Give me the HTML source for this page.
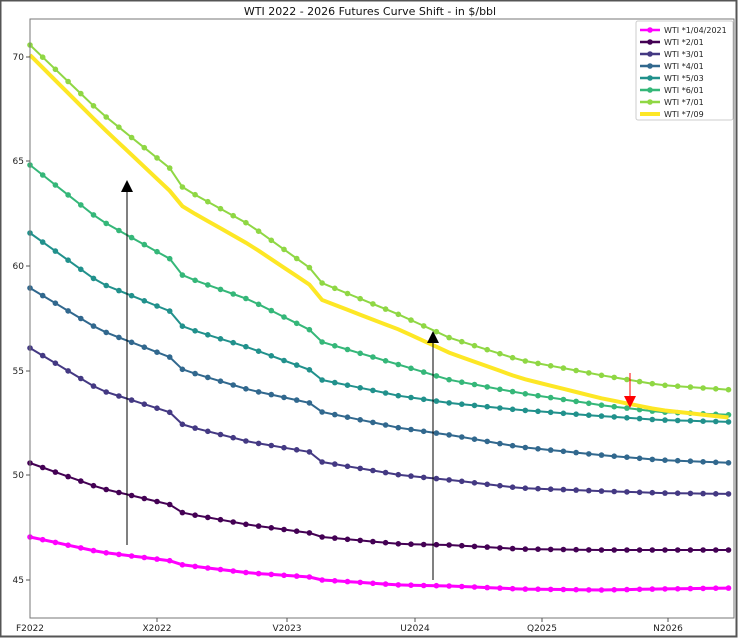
<!DOCTYPE html>
<html><head><style>
body{margin:0;background:#fff;width:740px;height:639px;overflow:hidden;font-family:"DejaVu Sans","Liberation Sans",sans-serif}
svg{position:absolute;left:0;top:0}
</style></head><body>
<svg width="740" height="639" xmlns="http://www.w3.org/2000/svg" font-family="DejaVu Sans, Liberation Sans, sans-serif">
<rect x="0.5" y="0.5" width="736" height="636" fill="#fff" stroke="#555" stroke-width="2"/>
<text x="370" y="15" font-size="11" text-anchor="middle" fill="#111">WTI 2022 - 2026 Futures Curve Shift - in $/bbl</text>
<g id="curves"></g>
<rect x="30" y="19" width="704" height="599" fill="none" stroke="#777" stroke-width="1"/>
<g font-size="9" fill="#222" text-anchor="end">
<line x1="26" x2="30" y1="57" y2="57" stroke="#555"/><text x="24" y="60">70</text>
<line x1="26" x2="30" y1="161" y2="161" stroke="#555"/><text x="24" y="164">65</text>
<line x1="26" x2="30" y1="266" y2="266" stroke="#555"/><text x="24" y="269">60</text>
<line x1="26" x2="30" y1="371" y2="371" stroke="#555"/><text x="24" y="374">55</text>
<line x1="26" x2="30" y1="475" y2="475" stroke="#555"/><text x="24" y="478">50</text>
<line x1="26" x2="30" y1="580" y2="580" stroke="#555"/><text x="24" y="583">45</text>
</g>
<g font-size="9" fill="#222" text-anchor="middle">
<text x="30" y="631">F2022</text><text x="157" y="631">X2022</text><text x="287" y="631">V2023</text>
<text x="415" y="631">U2024</text><text x="542" y="631">Q2025</text><text x="668" y="631">N2026</text>
<g stroke="#555"><line x1="157" x2="157" y1="618" y2="622"/><line x1="287" x2="287" y1="618" y2="622"/><line x1="415" x2="415" y1="618" y2="622"/><line x1="542" x2="542" y1="618" y2="622"/><line x1="668" x2="668" y1="618" y2="622"/></g>
</g>
<line x1="127" y1="545" x2="127" y2="190" stroke="#000" stroke-width="1"/>
<polygon points="127,180 121,192 133,192" fill="#000"/>
<line x1="433" y1="580" x2="433" y2="342" stroke="#000" stroke-width="1"/>
<polygon points="433,331 427,343 439,343" fill="#000"/>
<line x1="630" y1="373" x2="630" y2="397" stroke="#f00" stroke-width="1"/>
<polygon points="630,408 624,396 636,396" fill="#f00"/>
<rect x="636" y="21" width="97" height="99" fill="#fff" fill-opacity="0.9" stroke="#ccc" rx="2"/>
<g font-size="8" fill="#222" id="leg">
<text x="664" y="33">WTI *1/04/2021</text>
<text x="664" y="45">WTI *2/01</text>
<text x="664" y="57">WTI *3/01</text>
<text x="664" y="69">WTI *4/01</text>
<text x="664" y="81">WTI *5/03</text>
<text x="664" y="93">WTI *6/01</text>
<text x="664" y="105">WTI *7/01</text>
<text x="664" y="117">WTI *7/09</text>
</g>
</svg>
<script>
var S=[
["#ff00ff",3,true,[[30,537],[100,552],[172,561],[183,565],[250,573],[310,577],[322,580],[400,585],[450,586],[520,589],[600,590],[660,589],[733,588]]],
["#440154",2,true,[[30,463],[100,488],[172,505],[183,513],[250,525],[310,533],[322,537],[400,544],[450,545],[520,549],[600,550],[660,550],[733,550]]],
["#443983",2,true,[[30,348],[100,390],[172,413],[183,425],[250,442],[310,452],[322,462],[400,475],[450,480],[520,488],[600,491],[660,493],[733,494]]],
["#31688e",2,true,[[30,288],[100,330],[172,358],[183,370],[250,390],[310,403],[322,412],[400,428],[450,435],[520,447],[600,455],[660,460],[733,463]]],
["#21918c",2,true,[[30,233],[100,283],[172,312],[183,327],[250,348],[310,370],[322,380],[400,396],[450,403],[520,410],[600,416],[660,420],[733,422]]],
["#35b779",2,true,[[30,165],[100,220],[172,260],[183,276],[250,300],[310,330],[322,342],[400,365],[450,380],[520,393],[600,405],[660,412],[733,415]]],
["#8fd744",2,true,[[30,45],[100,112],[172,170],[183,188],[250,225],[310,268],[322,283],[400,315],[450,338],[520,360],[600,375],[660,385],[733,390]]],
["#fde725",4,false,[[30,55],[100,125],[172,193],[183,207],[250,245],[310,285],[322,300],[400,330],[450,353],[520,378],[600,398],[660,410],[733,418]]]
];
function f(k,x){for(var i=0;i<k.length-1;i++){if(x<=k[i+1][0]){var t=(x-k[i][0])/(k[i+1][0]-k[i][0]);return k[i][1]+t*(k[i+1][1]-k[i][1]);}}return k[k.length-1][1];}
var g=document.getElementById('curves'),h='',lg='';
S.forEach(function(s,i){var pts=[],d='';for(var x=30;x<=734;x+=12.7){var y=f(s[3],x);pts.push(x.toFixed(1)+','+y.toFixed(1));if(s[2])d+='<circle cx="'+x.toFixed(1)+'" cy="'+y.toFixed(1)+'" r="2.8" fill="'+s[0]+'"/>';}
h+='<polyline points="'+pts.join(' ')+'" fill="none" stroke="'+s[0]+'" stroke-width="'+s[1]+'"/>'+d;
var ly=30+i*12;lg+='<line x1="640" x2="660" y1="'+ly+'" y2="'+ly+'" stroke="'+s[0]+'" stroke-width="'+(s[2]?2.5:4)+'"/>'+(s[2]?'<circle cx="650" cy="'+ly+'" r="2.8" fill="'+s[0]+'"/>':'');});
g.innerHTML=h;document.getElementById('leg').insertAdjacentHTML('beforebegin',lg);
</script>
</body></html>
